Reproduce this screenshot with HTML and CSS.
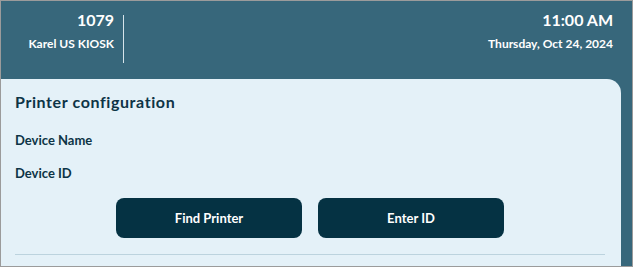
FILE: index.html
```html
<!DOCTYPE html>
<html>
<head>
<meta charset="utf-8">
<link rel="stylesheet" href="styles.css">
</head>
<body>
<div class="frame">
  <header class="header">
    <div class="store">
      <div class="big">1079</div>
      <div class="small">Karel US KIOSK</div>
    </div>
    <div class="vdivider"></div>
    <div class="spacer"></div>
    <div class="clock">
      <div class="big">11:00 AM</div>
      <div class="small">Thursday, Oct 24, 2024</div>
    </div>
  </header>
  <main class="main">
    <section class="panel">
      <h1 class="title">Printer configuration</h1>
      <div class="field field-name">Device Name</div>
      <div class="field field-id">Device ID</div>
      <div class="actions">
        <button class="btn">Find Printer</button>
        <button class="btn">Enter ID</button>
      </div>
      <div class="hr"></div>
    </section>
  </main>
</div>
</body>
</html>
```

FILE: styles.css
```css
html, body {
  margin: 0;
  padding: 0;
}
body {
  font-family: Lato, "Open Sans", sans-serif;
  background: #ffffff;
}
.frame {
  width: 633px;
  height: 267px;
  box-sizing: border-box;
  border: 1px solid #9b9b9b;
  background: #37677b;
  display: flex;
  flex-direction: column;
  overflow: hidden;
}
.header {
  height: 78px;
  flex: none;
  box-sizing: border-box;
  padding: 9px 19px 0 0;
  display: flex;
  align-items: flex-start;
  color: #ffffff;
}
.store {
  width: 113px;
  text-align: right;
}
.clock {
  text-align: right;
}
.big {
  font-size: 16px;
  line-height: 20px;
  font-weight: 700;
}
.small {
  font-size: 12px;
  line-height: 16px;
  font-weight: 700;
  margin-top: 6px;
}
.vdivider {
  width: 1px;
  height: 48px;
  margin: 5px 0 0 9px;
  background: #d6e4ea;
}
.spacer {
  flex: 1;
}
.main {
  flex: 1;
  display: flex;
  padding-right: 11px;
}
.panel {
  flex: 1;
  background: #e4f1f8;
  border-top-right-radius: 14px;
  padding: 13px 16px 0 14px;
  color: #0d3446;
}
.title {
  margin: 0;
  font-size: 16px;
  line-height: 19px;
  font-weight: 700;
  letter-spacing: 0.6px;
}
.field {
  font-size: 13px;
  line-height: 16px;
  font-weight: 700;
}
.field-name {
  margin-top: 21px;
}
.field-id {
  margin-top: 17px;
}
.actions {
  display: flex;
  justify-content: center;
  gap: 16px;
  margin-top: 17px;
}
.btn {
  width: 186px;
  height: 40px;
  border: none;
  border-radius: 8px;
  background: #053243;
  color: #ffffff;
  font-family: Lato, "Open Sans", sans-serif;
  font-size: 13px;
  font-weight: 700;
  padding: 0;
}
.hr {
  margin-top: 16px;
  height: 1px;
  background: #bcd3de;
}
```
